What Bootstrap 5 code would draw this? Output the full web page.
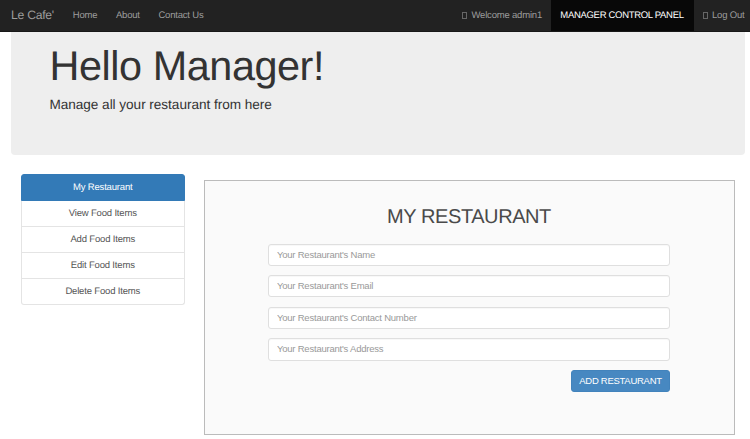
<!DOCTYPE html>
<html lang="en">
<head>
<meta charset="utf-8">
<meta name="viewport" content="width=device-width, initial-scale=1">
<title>Le Cafe'</title>
<link href="https://cdn.jsdelivr.net/npm/bootstrap@5.3.0/dist/css/bootstrap.min.css" rel="stylesheet">
<style>
body{font-family:"Liberation Sans",Arial,sans-serif;font-size:9.5px;line-height:13px;color:#333;text-rendering:geometricPrecision;overflow:hidden}
.site-nav{height:32px;background:#222;border-bottom:1px solid #181818;padding:0 5.5px 0 11px}
.site-nav .navbar-brand{font-size:12.2px;letter-spacing:-.26px;line-height:30px;color:#9d9d9d;padding:0;margin:0 9.5px 0 0}
.site-nav .nav-link{color:#9d9d9d;font-size:9.5px;letter-spacing:-.19px;line-height:32px;height:31px;padding:0 9.3px;white-space:nowrap}
.site-nav .nav-link.active{background:#080808;color:#fff;padding:0 9px;width:142.4px;letter-spacing:-.31px}
.glyph-box{display:inline-block;width:5px;height:7px;border:1px solid #666;margin-right:4px;vertical-align:-1px}
.hero{margin:0 5.5px 0 11px;height:122.5px;padding:11.5px 38.5px 0;background:#eee;border-radius:0 0 4px 4px}
.hero h1{font-size:41.4px;letter-spacing:-.44px;line-height:45px;font-weight:400;margin:0 0 6px}
.hero p{font-size:13.6px;letter-spacing:-.04px;line-height:19px;margin:0}
.main-row{padding:19px 15px 0 20.5px;gap:19px}
.side{width:164.5px}
.side .list-group{--bs-list-group-border-radius:3px;--bs-list-group-border-color:#e4e4e4}
.side .list-group-item{font-size:9.5px;letter-spacing:-.17px;line-height:13px;height:27.2px;padding:6.2px 10px;color:#555;text-align:center}
.side .list-group-item + .list-group-item{height:26.1px}
.side .list-group-item.active{background:#337ab7;border-color:#337ab7;color:#fff}
.panel-box{margin-top:6.5px;height:255px;background:#fafafa;border:1px solid #bbb;padding:25px 64px 0 63px}
.panel-box h2{font-size:20px;letter-spacing:-.42px;line-height:23px;font-weight:400;color:#4a4a4a;margin:0 0 14.5px;text-align:center}
.panel-box .form-control{height:22.3px;min-height:0;font-size:9.5px;letter-spacing:-.22px;line-height:13px;padding:3px 8px 4px;border:1px solid #dfdfdf;border-radius:3px;margin-bottom:9.3px;box-shadow:inset 0 1px 1px rgba(0,0,0,.03)}
.panel-box .form-control::placeholder{color:#999;opacity:1}
.panel-box .btn{width:99px;height:22px;font-size:9.5px;letter-spacing:-.28px;line-height:13px;padding:3px 0;border-radius:3px;background:#4788c1;border-color:#4283bc;color:#fff;white-space:nowrap}
</style>
</head>
<body>
<nav class="site-nav d-flex">
  <a class="navbar-brand" href="#">Le Cafe'</a>
  <ul class="nav flex-nowrap">
    <li class="nav-item"><a class="nav-link" href="#">Home</a></li>
    <li class="nav-item"><a class="nav-link" href="#">About</a></li>
    <li class="nav-item"><a class="nav-link" href="#">Contact Us</a></li>
  </ul>
  <ul class="nav flex-nowrap ms-auto">
    <li class="nav-item"><a class="nav-link" href="#"><span class="glyph-box"></span>Welcome admin1</a></li>
    <li class="nav-item"><a class="nav-link active" href="#">MANAGER CONTROL PANEL</a></li>
    <li class="nav-item"><a class="nav-link pe-0" href="#"><span class="glyph-box"></span>Log Out</a></li>
  </ul>
</nav>
<header class="hero">
  <h1>Hello Manager!</h1>
  <p>Manage all your restaurant from here</p>
</header>
<main class="main-row d-flex align-items-start">
  <aside class="side flex-shrink-0">
    <div class="list-group">
      <a href="#" class="list-group-item active">My Restaurant</a>
      <a href="#" class="list-group-item">View Food Items</a>
      <a href="#" class="list-group-item">Add Food Items</a>
      <a href="#" class="list-group-item">Edit Food Items</a>
      <a href="#" class="list-group-item">Delete Food Items</a>
    </div>
  </aside>
  <section class="panel-box flex-grow-1">
    <h2>MY RESTAURANT</h2>
    <form>
      <input class="form-control" type="text" placeholder="Your Restaurant's Name">
      <input class="form-control" type="text" placeholder="Your Restaurant's Email">
      <input class="form-control" type="text" placeholder="Your Restaurant's Contact Number">
      <input class="form-control" type="text" placeholder="Your Restaurant's Address">
      <div class="d-flex justify-content-end"><button class="btn" type="button">ADD RESTAURANT</button></div>
    </form>
  </section>
</main>
<script src="https://cdn.jsdelivr.net/npm/bootstrap@5.3.0/dist/js/bootstrap.bundle.min.js"></script>
</body>
</html>
